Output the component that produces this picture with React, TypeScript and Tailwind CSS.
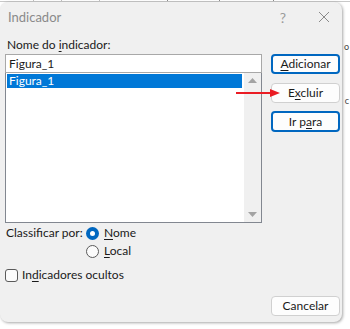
import React from 'react';

const font = { fontFamily: 'Lato, "Noto Sans", sans-serif' };

const Btn = ({ children, primary, className = '' }: { children: React.ReactNode; primary?: boolean; className?: string }) => (
  <button
    className={`w-[69px] h-[20px] rounded-[4px] bg-[#fdfdfd] text-[12px] leading-none text-[#1a1a1a] ${
      primary ? 'border-2 border-[#0067c0]' : 'border border-[#d0d0d0]'
    } ${className}`}
  >
    {children}
  </button>
);

export default function App() {
  return (
    <div className="relative w-[350px] h-[329px] bg-white overflow-hidden" style={font}>
      {/* sheet behind the dialog */}
      <div className="flex h-[2px] border-b border-[#c8c8c8]">
        <div className="w-[34px] border-r border-[#bdbdbd]" />
        <div className="w-[28px] border-r border-[#bdbdbd]" />
        <div className="w-[38px] border-r border-[#bdbdbd]" />
        <div className="w-[68px] border-r border-[#8a8a8a]" />
        <div className="w-[52px] border-r border-[#8a8a8a]" />
        <div className="w-[54px] border-r border-[#8a8a8a]" />
      </div>
      <div className="absolute right-[1px] top-[40px] text-[9px] text-[#444]">o</div>
      <div className="absolute right-[1px] top-[94px] text-[9px] text-[#444]">c</div>

      <div className="w-[342px] h-[320px] rounded-lg bg-[#f0f0f0] shadow-[1px_1px_3px_rgba(0,0,0,0.35)] flex flex-col">
        {/* title bar */}
        <div className="h-[30px] flex items-center pl-[8px] pr-[12px]">
          <span className="text-[13px] text-[#8a8a8a] flex-1 pt-[1px]">Indicador</span>
          <span className="text-[14px] text-[#9a9a9a] mr-[32px]">?</span>
          <svg width="12" height="12" viewBox="0 0 12 12">
            <path d="M1 1 L11 11 M11 1 L1 11" stroke="#8a8a8a" strokeWidth="1" />
          </svg>
        </div>

        {/* body */}
        <div className="flex flex-1 pl-[5px] pb-[6px]">
          <div className="w-[257px] flex flex-col">
            <div className="text-[12px] leading-[16px] text-[#1a1a1a] mt-[5px] ml-[2px]">
              Nome do <span className="underline underline-offset-2">i</span>ndicador:
            </div>
            <div className="mt-[1px] h-[19px] border border-[#a8a8a8] bg-white flex items-center px-[3px] text-[12px] text-[#1a1a1a]">
              Figura_1
            </div>
            <div className="h-[150px] border border-[#828790] border-t-0 bg-white flex">
              <div className="flex-1 pt-[1px] pl-[1px]">
                <div className="h-[14px] bg-[#0078d7] text-white text-[12px] leading-[14px] pl-[2px] mr-[2px]">Figura_1</div>
              </div>
              <div className="w-[17px] bg-[#f0f0f0] flex flex-col items-center justify-between py-[5px]">
                <svg width="9" height="5" viewBox="0 0 9 5"><path d="M0 5 L4.5 0 L9 5 Z" fill="#a3a3a3" /></svg>
                <svg width="9" height="5" viewBox="0 0 9 5"><path d="M0 0 L4.5 5 L9 0 Z" fill="#a3a3a3" /></svg>
              </div>
            </div>

            <div className="flex mt-[2px] text-[12px] text-[#1a1a1a]">
              <span className="ml-[1px] w-[80px] leading-[16px] whitespace-nowrap">Classificar por:</span>
              <div className="flex flex-col gap-[2px]">
                <label className="flex items-center gap-[5px] leading-[16px]">
                  <span className="w-[13px] h-[13px] rounded-full bg-[#0067c0] flex items-center justify-center">
                    <span className="w-[5px] h-[5px] rounded-full bg-white" />
                  </span>
                  <span><span className="underline underline-offset-2">N</span>ome</span>
                </label>
                <label className="flex items-center gap-[5px] leading-[16px]">
                  <span className="w-[13px] h-[13px] rounded-full border border-[#5a5a5a] bg-[#fbfbfb]" />
                  <span><span className="underline underline-offset-2">L</span>ocal</span>
                </label>
              </div>
            </div>

            <label className="flex items-center gap-[4px] mt-[8px] text-[12px] leading-[16px] text-[#1a1a1a]">
              <span className="w-[13px] h-[13px] rounded-[3px] border border-[#5a5a5a] bg-[#fbfbfb]" />
              <span>In<span className="underline underline-offset-2">d</span>icadores ocultos</span>
            </label>
          </div>

          <div className="ml-[9px] flex flex-col">
            <Btn primary className="mt-[22px]">
              <span className="underline underline-offset-2">A</span>dicionar
            </Btn>
            <Btn className="mt-[9px]">
              E<span className="underline underline-offset-2">x</span>cluir
            </Btn>
            <Btn primary className="mt-[8px] h-[21px]">
              Ir p<span className="underline underline-offset-2">a</span>ra
            </Btn>
            <Btn className="mt-auto">Cancelar</Btn>
          </div>
        </div>
      </div>

      {/* red arrow annotation */}
      <svg className="absolute left-[236px] top-[88px]" width="46" height="10" viewBox="0 0 46 10">
        <path d="M0 5 L36 5" stroke="#ea1c24" strokeWidth="2" />
        <path d="M34 1 L44 5 L34 9 Z" fill="#ea1c24" />
      </svg>
    </div>
  );
}
